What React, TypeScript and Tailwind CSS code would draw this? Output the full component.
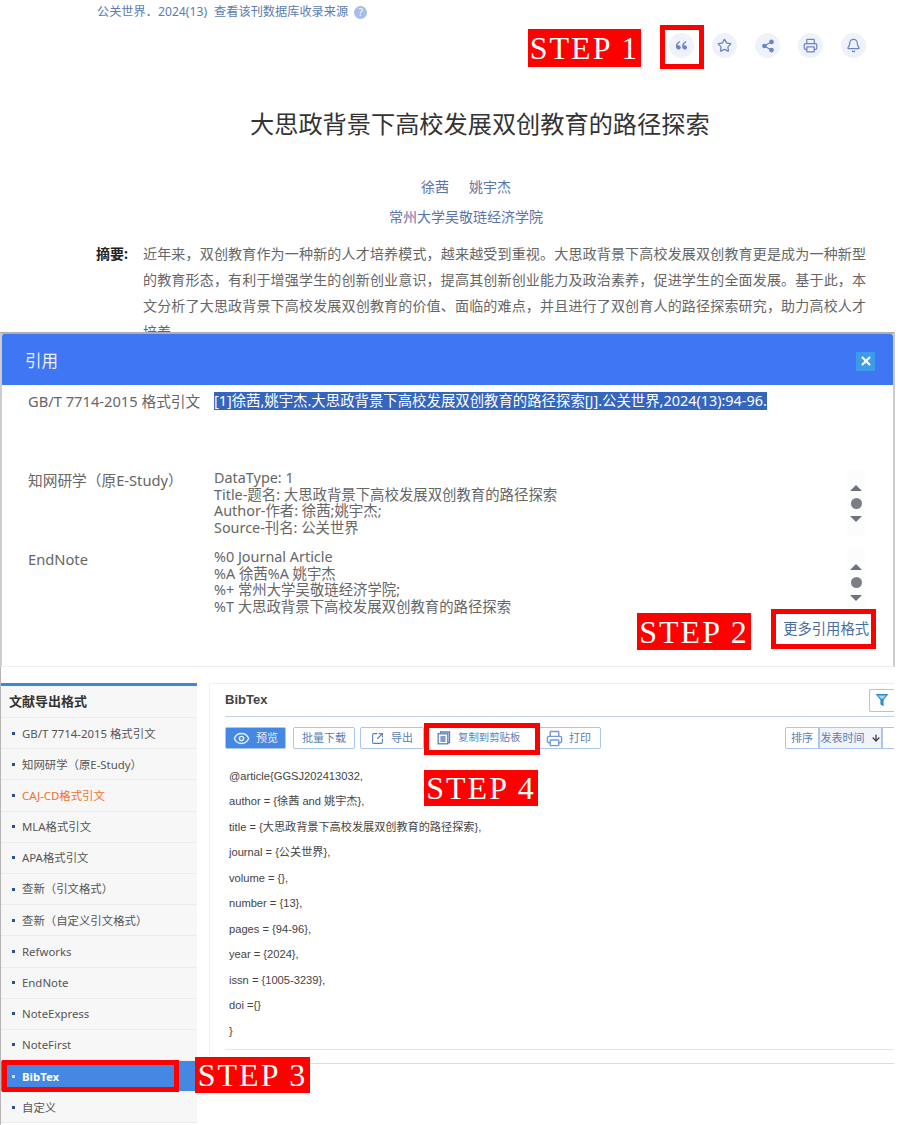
import { Bell, Eye, Printer, Share2, Star, SquareArrowOutUpRight, ArrowDown, X } from "lucide-react";
import { RiDoubleQuotesL } from "react-icons/ri";

const sideItems = [
  "GB/T 7714-2015 格式引文",
  "知网研学（原E-Study）",
  "CAJ-CD格式引文",
  "MLA格式引文",
  "APA格式引文",
  "查新（引文格式）",
  "查新（自定义引文格式）",
  "Refworks",
  "EndNote",
  "NoteExpress",
  "NoteFirst",
  "BibTex",
  "自定义",
];

const bibLines = [
  "@article{GGSJ202413032,",
  "author = {徐茜 and 姚宇杰},",
  "title = {大思政背景下高校发展双创教育的路径探索},",
  "journal = {公关世界},",
  "volume = {},",
  "number = {13},",
  "pages = {94-96},",
  "year = {2024},",
  "issn = {1005-3239},",
  "doi ={}",
  "}",
];

const ScrollArrows = () => (
  <div className="w-[18px] h-[66px] bg-[#fcfcfc] flex flex-col items-center justify-center gap-[7px] shrink-0">
    <div className="w-0 h-0 border-x-[6px] border-x-transparent border-b-[6px] border-b-[#6b7280]" />
    <div className="w-[11px] h-[11px] rounded-full bg-[#7b7f85]" />
    <div className="w-0 h-0 border-x-[6px] border-x-transparent border-t-[6px] border-t-[#6b7280]" />
  </div>
);

const StepLabel = ({ text, className }: { text: string; className: string }) => (
  <div
    className={`absolute bg-[#ff0000] text-white font-['Liberation_Serif',serif] text-[32px] tracking-[2px] leading-none flex items-center justify-center whitespace-nowrap ${className}`}
  >
    {text}
  </div>
);

const RoundIcon = ({ children }: { children: React.ReactNode }) => (
  <div className="w-[25px] h-[25px] rounded-full bg-[#eff2fa] text-[#6b84c4] flex items-center justify-center">
    {children}
  </div>
);

const ToolButton = ({ children, className }: { children: React.ReactNode; className: string }) => (
  <div
    className={`h-[22px] border border-[#a9c6f0] rounded-[2px] flex items-center justify-center gap-[6px] text-[11px] text-[#5a7fb5] ${className}`}
  >
    {children}
  </div>
);

const CopyIcon = () => (
  <svg viewBox="0 0 14 14" className="w-[14px] h-[14px] text-[#5a7fb5]" fill="none" stroke="currentColor" strokeWidth="1.3">
    <path d="M3.5 2.5V1h9v10.5H11" />
    <rect x="1.2" y="2.8" width="9.6" height="10" />
    <path d="M3.4 6h5.2M3.4 8h5.2M3.4 10h5.2" />
  </svg>
);

const FilterIcon = () => (
  <svg viewBox="0 0 14 14" className="w-[14px] h-[14px]">
    <path d="M0.5 1h13L8.6 7v6.2L5.4 11.4V7z" fill="#2f8fc8" />
    <path d="M3 2.6h8L8 5.8H6z" fill="#a9d4f0" />
  </svg>
);

export default function App() {
  return (
    <div className="relative w-[904px] h-[1125px] overflow-hidden bg-white font-['Noto_Sans','Noto_Sans_CJK_SC',sans-serif]">
      {/* article header */}
      <div className="h-[332px] w-[894px] overflow-hidden">
        <div className="pl-[97px] pt-[3px] flex items-center text-[12.2px] leading-[18px] text-[#5b7db1]">
          <span>公关世界．2024(13)</span>
          <span className="ml-[7px]">查看该刊数据库收录来源</span>
          <span className="ml-[6px] w-[13px] h-[13px] rounded-full bg-[#a5bdea] text-white text-[10px] leading-[13px] text-center">?</span>
        </div>
        <div className="mt-[12px] pr-[28px] flex justify-end gap-[18px] h-[25px]">
          <RoundIcon>
            <RiDoubleQuotesL className="w-[15px] h-[15px]" />
          </RoundIcon>
          <RoundIcon>
            <Star className="w-[15px] h-[15px]" />
          </RoundIcon>
          <RoundIcon>
            <Share2 className="w-[14px] h-[14px] fill-[#6b84c4]" />
          </RoundIcon>
          <RoundIcon>
            <Printer className="w-[15px] h-[15px]" />
          </RoundIcon>
          <RoundIcon>
            <Bell className="w-[15px] h-[15px]" />
          </RoundIcon>
        </div>
        <h1 className="mt-[49px] pl-[250px] text-[24.2px] leading-[34px] text-[#333] font-normal">
          大思政背景下高校发展双创教育的路径探索
        </h1>
        <div className="mt-[36px] pl-[421px] flex gap-[20px] text-[14px] leading-[20px] text-[#5b75ab]">
          <span>徐茜</span>
          <span>姚宇杰</span>
        </div>
        <div className="mt-[10px] pl-[389px] text-[14px] leading-[20px] text-[#5b75ab]">常州大学吴敬琏经济学院</div>
        <div className="mt-[14px] pl-[96px] flex text-[14px] leading-[26px]">
          <span className="w-[47px] shrink-0 font-bold text-[#222]">摘要:</span>
          <p className="w-[723px] text-[#666] text-justify">
            近年来，双创教育作为一种新的人才培养模式，越来越受到重视。大思政背景下高校发展双创教育更是成为一种新型的教育形态，有利于增强学生的创新创业意识，提高其创新创业能力及政治素养，促进学生的全面发展。基于此，本文分析了大思政背景下高校发展双创教育的价值、面临的难点，并且进行了双创育人的路径探索研究，助力高校人才培养。
          </p>
        </div>
      </div>

      {/* citation dialog */}
      <div className="w-[895px] h-[335px] border-t-[2px] border-t-[#b0b0b0] border-x-2 border-x-[#cccccc] border-b border-b-[#eeeeee] bg-white text-[14.4px] leading-[16.7px] text-[#666]">
        <div className="h-[51px] bg-[#3f76f3] flex items-center justify-between pl-[23px] pr-[18px] pt-[3px] rounded-t-[2px]">
          <span className="text-[16.5px] text-[#e8efff]">引用</span>
          <div className="w-[19px] h-[19px] bg-[#3d9be9] text-white flex items-center justify-center">
            <X className="w-[14px] h-[14px]" strokeWidth={3.5} />
          </div>
        </div>
        <div className="flex pl-[26px] pr-[28px] pt-[7px] h-[85px]">
          <div className="w-[186px] shrink-0 leading-[18px] text-[14.7px]">GB/T 7714-2015 格式引文</div>
          <div>
            <span className="bg-[#3465bf] text-white leading-[18px] inline-block whitespace-nowrap">
              [1]徐茜,姚宇杰.大思政背景下高校发展双创教育的路径探索[J].公关世界,2024(13):94-96.
            </span>
          </div>
        </div>
        <div className="flex pl-[26px] pr-[28px] h-[78px]">
          <div className="w-[186px] shrink-0 pt-[1px] leading-[18px] text-[14.7px]">知网研学（原E-Study）</div>
          <div className="flex-1">
            <div>DataType: 1</div>
            <div>Title-题名: 大思政背景下高校发展双创教育的路径探索</div>
            <div>Author-作者: 徐茜;姚宇杰;</div>
            <div>Source-刊名: 公关世界</div>
          </div>
          <ScrollArrows />
        </div>
        <div className="flex pl-[26px] pr-[28px] h-[66px] pt-[1px]">
          <div className="w-[186px] shrink-0 pt-[1px] leading-[18px] text-[14.7px]">EndNote</div>
          <div className="flex-1">
            <div>%0 Journal Article</div>
            <div>%A 徐茜%A 姚宇杰</div>
            <div>%+ 常州大学吴敬琏经济学院;</div>
            <div>%T 大思政背景下高校发展双创教育的路径探索</div>
          </div>
          <ScrollArrows />
        </div>
        <div className="flex justify-end pr-[24px] pt-[7px] text-[14.3px] text-[#4a6da0]">更多引用格式</div>
      </div>

      {/* export page */}
      <div className="w-[894px] h-[458px] flex items-start pt-[16px] border-l border-l-[#b5b5b5]">
        <aside className="w-[196px] shrink-0 bg-[#f7f7f7] border-t-[3px] border-t-[#3d87e0]">
          <div className="h-[32px] pl-[8px] flex items-center text-[13px] font-bold text-[#333] border-b border-b-[#ececec]">
            文献导出格式
          </div>
          {sideItems.map((item) => (
            <div
              key={item}
              className={`h-[31.2px] flex items-center pl-[11px] gap-[7px] text-[11.4px] border-b border-b-[#ececec] ${
                item === "BibTex"
                  ? "bg-[#4488e4] text-white font-bold"
                  : item === "CAJ-CD格式引文"
                    ? "text-[#f0702a]"
                    : "text-[#555]"
              }`}
            >
              <span className={`w-[3px] h-[3px] shrink-0 ${item === "BibTex" ? "bg-[#cfe0f8]" : "bg-[#2a4f94]"}`} />
              {item}
            </div>
          ))}
        </aside>
        <main className="ml-[12px] flex-1 min-w-0 h-[381px] overflow-hidden border-t border-t-[#eeeeee] border-b border-b-[#dddddd] border-l border-l-[#f2f2f2] pl-[15px] font-['Liberation_Sans','Noto_Sans_CJK_SC',sans-serif]">
          <div className="h-[33px] flex items-center justify-between border-b border-b-[#c5d0ea]">
            <span className="text-[13px] font-bold text-[#444]">BibTex</span>
            <div className="w-[25px] h-[23px] border border-[#a9c6f0] border-r-0 rounded-l-[2px] flex items-center pl-[5px] overflow-hidden">
              <FilterIcon />
            </div>
          </div>
          <div className="mt-[10px] h-[22px] flex items-center">
            <ToolButton className="w-[61px] bg-[#4488e4] border-[#4488e4] text-[#e6effb]">
              <Eye className="w-[17px] h-[17px]" />
              预览
            </ToolButton>
            <ToolButton className="ml-[7px] w-[62px]">批量下载</ToolButton>
            <ToolButton className="ml-[5px] w-[64px] gap-[7px]">
              <SquareArrowOutUpRight className="w-[13px] h-[13px]" />
              导出
            </ToolButton>
            <div className="w-[111px] h-[22px] flex items-center pl-[13px] gap-[7px] text-[10.4px] text-[#5a7fb5]">
              <CopyIcon />
              复制到剪贴板
            </div>
            <ToolButton className="ml-[2px] w-[64px] !justify-start pl-[8px] gap-[5px]">
              <Printer className="w-[17px] h-[17px] text-[#6f9bd8]" />
              打印
            </ToolButton>
            <div className="ml-auto flex">
              <ToolButton className="w-[34px] rounded-r-none">排序</ToolButton>
              <ToolButton className="w-[63px] bg-[#f0f3f8] rounded-none gap-[1px]">
                发表时间
                <ArrowDown className="w-[10px] h-[10px] text-[#333]" strokeWidth={3} />
              </ToolButton>
              <div className="w-[12px] h-[22px] border border-[#a9c6f0] border-r-0" />
            </div>
          </div>
          <div className="mt-[15px] pl-[4px] pb-[5px] text-[11.15px] leading-[25.45px] text-[#444] border-b border-b-[#e5e5e5]">
            {bibLines.map((line) => (
              <div key={line}>{line}</div>
            ))}
          </div>
        </main>
      </div>

      {/* tutorial annotations laid over the screenshot */}
      <StepLabel text="STEP 1" className="left-[528px] top-[29px] w-[113px] h-[38px]" />
      <div className="absolute left-[660px] top-[25px] w-[44px] h-[44px] border-[5px] border-[#ff0000]" />
      <StepLabel text="STEP 2" className="left-[637px] top-[613px] w-[114px] h-[37px]" />
      <div className="absolute left-[771px] top-[609px] w-[105px] h-[40px] border-[5px] border-[#ff0000]" />
      <StepLabel text="STEP 3" className="left-[195px] top-[1057px] w-[115px] h-[36px]" />
      <div className="absolute left-[2px] top-[1060px] w-[177px] h-[32px] border-[5px] border-[#ff0000]" />
      <StepLabel text="STEP 4" className="left-[424px] top-[770px] w-[114px] h-[36px]" />
      <div className="absolute left-[424px] top-[723px] w-[116px] h-[32px] border-[5px] border-[#ff0000]" />
    </div>
  );
}
